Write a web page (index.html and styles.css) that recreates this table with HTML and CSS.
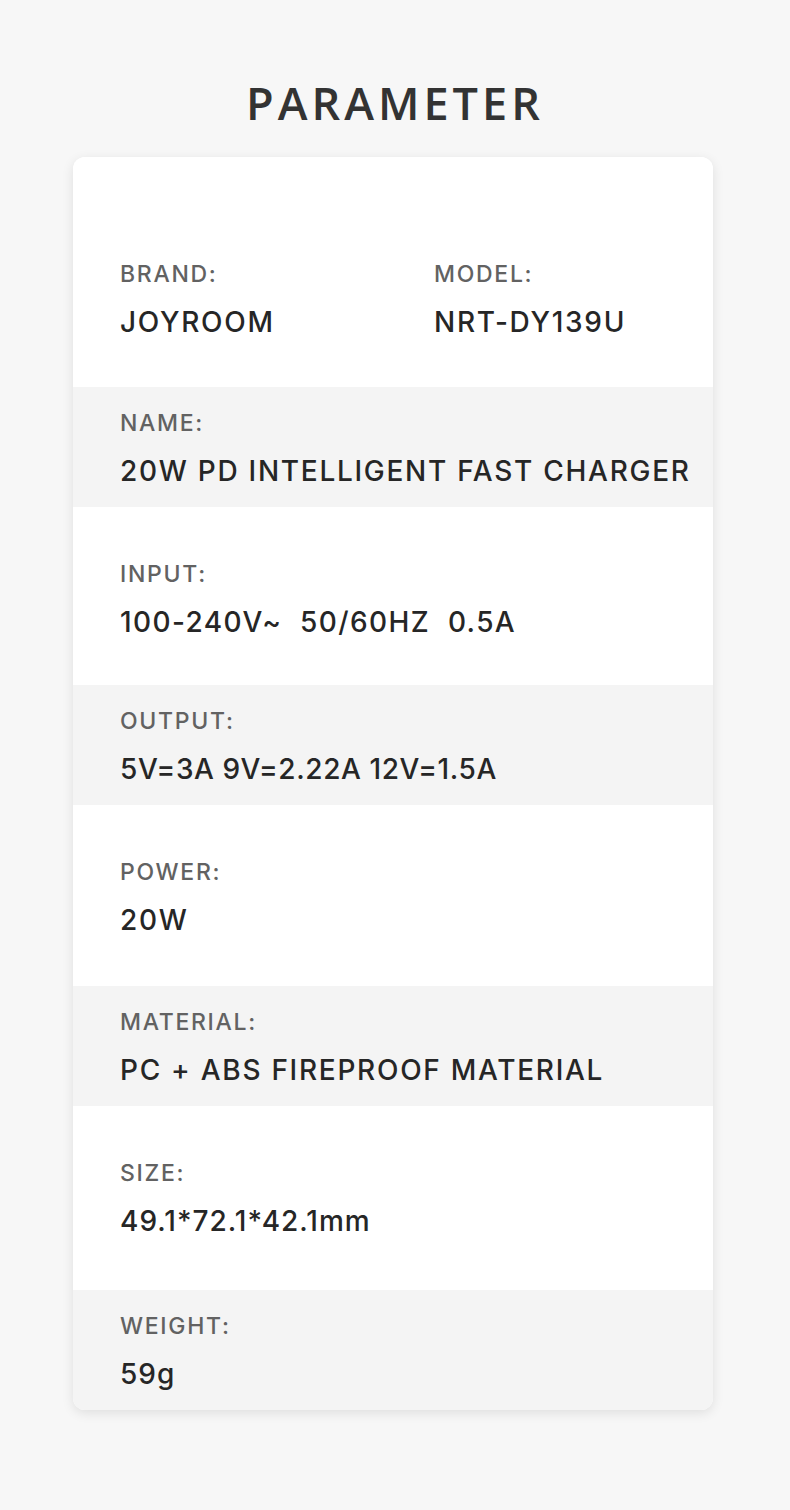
FILE: index.html
```html
<!DOCTYPE html>
<html lang="en">
<head>
<meta charset="utf-8">
<title>Parameter</title>
<link rel="stylesheet" href="styles.css">
</head>
<body>
<main class="page">
  <h1 class="title">PARAMETER</h1>
  <section class="card">
    <div class="row row-white row-brand">
      <div class="pair">
        <div class="field">
          <div class="label">BRAND:</div>
          <div class="value">JOYROOM</div>
        </div>
        <div class="field">
          <div class="label">MODEL:</div>
          <div class="value">NRT-DY139U</div>
        </div>
      </div>
    </div>
    <div class="row row-grey">
      <div class="label">NAME:</div>
      <div class="value">20W PD INTELLIGENT FAST CHARGER</div>
    </div>
    <div class="row row-white row-input">
      <div class="label">INPUT:</div>
      <div class="value value-input">100-240V~&nbsp;&nbsp;50/60HZ&nbsp;&nbsp;0.5A</div>
    </div>
    <div class="row row-grey">
      <div class="label">OUTPUT:</div>
      <div class="value value-output">5V=3A 9V=2.22A 12V=1.5A</div>
    </div>
    <div class="row row-white row-power">
      <div class="label">POWER:</div>
      <div class="value">20W</div>
    </div>
    <div class="row row-grey">
      <div class="label">MATERIAL:</div>
      <div class="value">PC + ABS FIREPROOF MATERIAL</div>
    </div>
    <div class="row row-white row-size">
      <div class="label">SIZE:</div>
      <div class="value value-size">49.1*72.1*42.1mm</div>
    </div>
    <div class="row row-grey row-last">
      <div class="label">WEIGHT:</div>
      <div class="value value-size">59g</div>
    </div>
  </section>
</main>
</body>
</html>
```

FILE: styles.css
```css
* { box-sizing: border-box; }
html, body {
  margin: 0;
  padding: 0;
  background: #f7f7f7;
}
.page {
  width: 790px;
  min-height: 1510px;
  padding-top: 80px;
  padding-right: 4px;
  display: flex;
  flex-direction: column;
  align-items: center;
}
.title {
  margin: 0 0 32px 0;
  font-family: "Open Sans", "Liberation Sans", sans-serif;
  font-weight: 600;
  font-size: 45px;
  line-height: 45px;
  letter-spacing: 4px;
  color: #333333;
  padding-left: 4px;
}
.card {
  width: 640px;
  background: #ffffff;
  border-radius: 12px;
  box-shadow: 0 3px 12px rgba(0, 0, 0, 0.10);
  overflow: hidden;
  font-family: "Inter", "DejaVu Sans", sans-serif;
}
.row {
  padding-left: 47px;
  display: flex;
  flex-direction: column;
}
.row-white { background: #ffffff; padding-top: 56px; }
.row-grey { background: #f4f4f4; padding-top: 25px; height: 120px; }
.row-brand { padding-top: 106px; height: 230px; }
.row-input { height: 178px; }
.row-power { height: 181px; }
.row-size { height: 184px; }
.row-last { height: 120px; }
.pair {
  display: grid;
  grid-template-columns: 314px 1fr;
}
.label {
  font-size: 23px;
  line-height: 23px;
  font-weight: 500;
  letter-spacing: 1.7px;
  color: #626262;
}
.value {
  margin-top: 22px;
  font-size: 28px;
  line-height: 28px;
  font-weight: 500;
  letter-spacing: 1.72px;
  color: #262626;
  white-space: nowrap;
}
.value-input { letter-spacing: 1.4px; }
.value-output { letter-spacing: 0.6px; }
.value-size { letter-spacing: 1px; }
```
